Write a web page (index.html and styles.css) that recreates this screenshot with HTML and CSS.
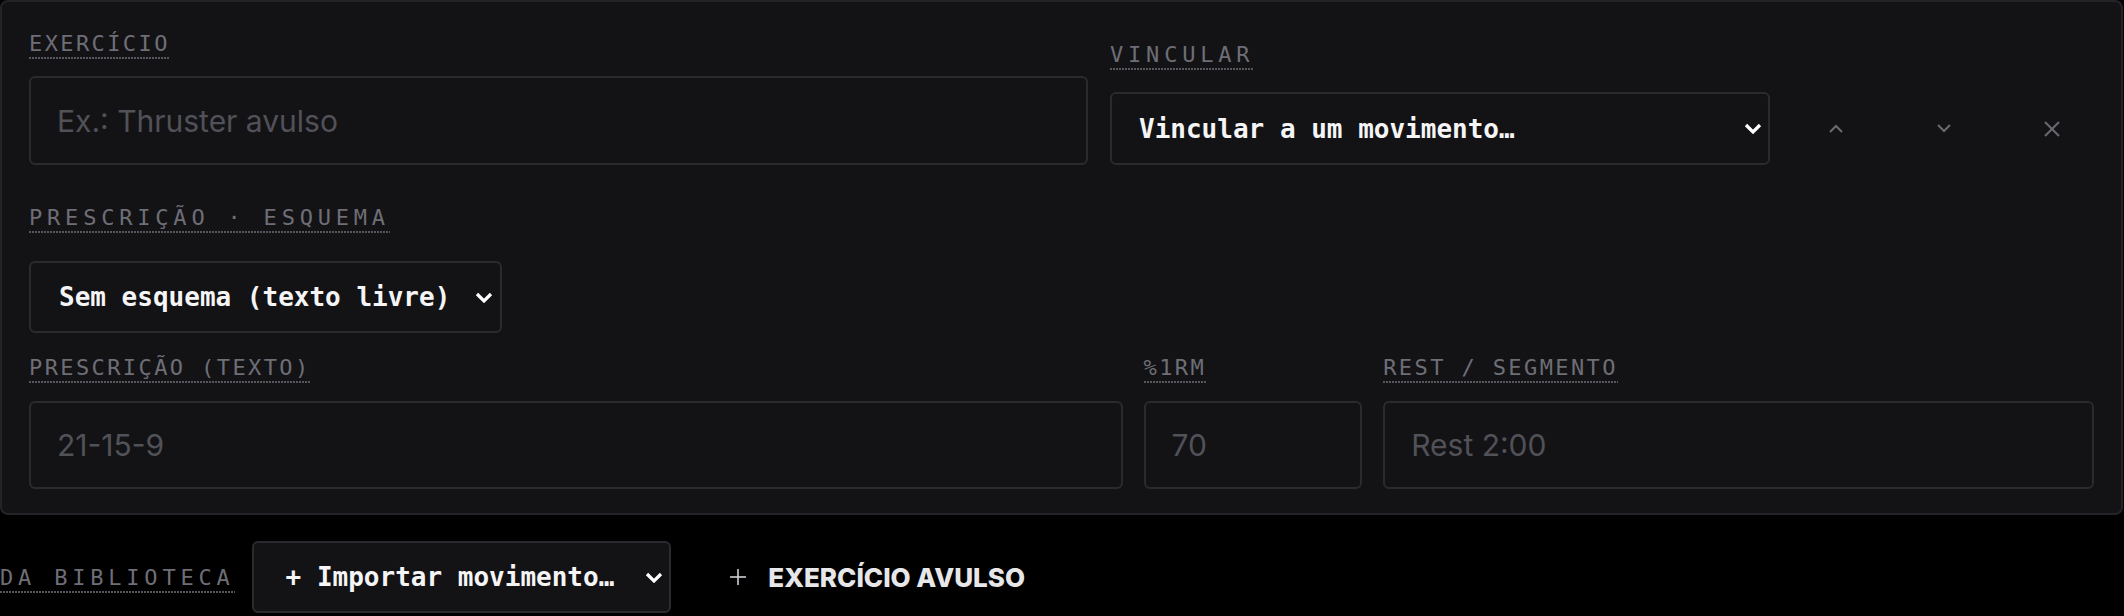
FILE: index.html
```html
<!DOCTYPE html>
<html lang="pt-BR">
<head>
<meta charset="utf-8">
<title>Exercício avulso</title>
<link rel="stylesheet" href="styles.css">
</head>
<body>
<section class="card">
  <div class="row-top">
    <div class="field field--grow">
      <label class="lbl">EXERCÍCIO</label>
      <input class="input input--tall" type="text" placeholder="Ex.: Thruster avulso">
    </div>
    <div class="field field--link">
      <label class="lbl lbl--wide lbl--gap">VINCULAR</label>
      <div class="select select--link">
        <span class="select__text">Vincular a um movimento…</span>
        <svg class="chev" width="18" height="11" viewBox="0 0 18 11"><polyline points="2,2 9,9 16,2"/></svg>
      </div>
    </div>
    <button class="icon-btn" type="button" aria-label="Mover para cima">
      <svg width="14" height="9" viewBox="0 0 14 9"><polyline points="1,8 7,2 13,8"/></svg>
    </button>
    <button class="icon-btn" type="button" aria-label="Mover para baixo">
      <svg width="14" height="9" viewBox="0 0 14 9"><polyline points="1,1 7,7 13,1"/></svg>
    </button>
    <button class="icon-btn" type="button" aria-label="Remover">
      <svg width="16" height="16" viewBox="0 0 16 16"><line x1="1" y1="1" x2="15" y2="15"/><line x1="15" y1="1" x2="1" y2="15"/></svg>
    </button>
  </div>

  <div class="field field--scheme">
    <label class="lbl lbl--wide lbl--scheme">PRESCRIÇÃO · ESQUEMA</label>
    <div class="select">
      <span class="select__text">Sem esquema (texto livre)</span>
      <svg class="chev" width="18" height="11" viewBox="0 0 18 11"><polyline points="2,2 9,9 16,2"/></svg>
    </div>
  </div>

  <div class="row-grid">
    <div class="field">
      <label class="lbl lbl--tight">PRESCRIÇÃO (TEXTO)</label>
      <input class="input" type="text" placeholder="21-15-9">
    </div>
    <div class="field">
      <label class="lbl lbl--tight">%1RM</label>
      <input class="input" type="text" placeholder="70">
    </div>
    <div class="field">
      <label class="lbl lbl--tight">REST / SEGMENTO</label>
      <input class="input" type="text" placeholder="Rest 2:00">
    </div>
  </div>
</section>

<div class="footer">
  <span class="lbl lbl--wide">DA BIBLIOTECA</span>
  <div class="select select--import">
    <span class="select__text">+ Importar movimento…</span>
    <svg class="chev" width="18" height="11" viewBox="0 0 18 11"><polyline points="2,2 9,9 16,2"/></svg>
  </div>
  <button class="add-btn" type="button">
    <svg width="16" height="16" viewBox="0 0 16 16"><line x1="8" y1="0" x2="8" y2="16"/><line x1="0" y1="8" x2="16" y2="8"/></svg>
    <span>EXERCÍCIO AVULSO</span>
  </button>
</div>
</body>
</html>
```

FILE: styles.css
```css
* {
  box-sizing: border-box;
}

html,
body {
  margin: 0;
  background: #000;
}

body {
  width: 2124px;
  height: 616px;
  overflow: hidden;
  font-family: "DejaVu Sans Mono", monospace;
}

/* Editor card */
.card {
  width: 2123px;
  background: #131316;
  border: 2px solid #242428;
  border-radius: 8px;
  padding: 30px 27px 24px 27px;
}

/* Field labels: mono caps with a dotted rule below */
.lbl {
  display: inline-block;
  align-self: flex-start;
  font: 400 22px/24px "DejaVu Sans Mono", monospace;
  letter-spacing: 2.4px;
  color: #6e6e76;
  padding-bottom: 3px;
  margin-bottom: 17px;
  background: linear-gradient(to right, #56565e 2px, transparent 2px) left bottom / 3px 2px repeat-x;
  white-space: nowrap;
}

.lbl--wide {
  letter-spacing: 4.8px;
}

.lbl--gap {
  margin-bottom: 22px;
}

.lbl--scheme {
  margin-bottom: 28px;
}

.lbl--tight {
  margin-bottom: 18px;
}

.field {
  display: flex;
  flex-direction: column;
  min-width: 0;
}

.field--grow {
  flex: 1;
}

.field--link {
  width: 660px;
}

/* Text inputs */
.input {
  width: 100%;
  height: 88px;
  background: #131316;
  border: 2px solid #2a2a2f;
  border-radius: 6px;
  padding: 0 26px;
  font: 400 30px "Inter", sans-serif;
  color: #e6e6e8;
  outline: none;
}

.input--tall {
  height: 89px;
}

.input::placeholder {
  color: #515158;
}

/* Dropdowns */
.select {
  display: inline-flex;
  align-items: center;
  align-self: flex-start;
  gap: 25px;
  height: 72px;
  padding: 0 7px 0 28px;
  background: #131316;
  border: 2px solid #2a2a2f;
  border-radius: 6px;
  font: 700 26px "DejaVu Sans Mono", monospace;
  color: #f5f5f6;
  white-space: nowrap;
}

.select--link {
  align-self: stretch;
  justify-content: space-between;
  height: 73px;
  padding: 0 6px 0 27px;
}

.select--import {
  padding: 0 6px 0 32px;
  gap: 31px;
}

.chev {
  flex: none;
  fill: none;
  stroke: #ffffff;
  stroke-width: 3.2;
}

/* Top row: name, link select and row actions */
.row-top {
  display: flex;
  align-items: flex-end;
}

.row-top .field--link {
  margin-left: 22px;
  margin-right: 24px;
}

.icon-btn {
  flex: none;
  width: 84px;
  height: 73px;
  display: grid;
  place-items: center;
  background: none;
  border: none;
  padding: 0;
  margin-right: 24px;
}

.icon-btn:last-child {
  margin-right: 0;
}

.icon-btn svg {
  fill: none;
  stroke: #6a6a71;
  stroke-width: 2;
}

.field--scheme {
  margin-top: 41px;
}

/* Prescription row */
.row-grid {
  display: grid;
  grid-template-columns: 5fr 1fr 3.25fr;
  column-gap: 21px;
  margin-top: 23px;
}

/* Library footer */
.footer {
  display: flex;
  align-items: center;
  gap: 17px;
  margin-top: 26px;
}

.footer .lbl {
  margin-bottom: 0;
  align-self: center;
  margin-top: 4px;
}

.add-btn {
  display: inline-flex;
  align-items: center;
  gap: 22px;
  margin-left: 42px;
  background: none;
  border: none;
  padding: 0;
  font: 800 26px "Inter", sans-serif;
  letter-spacing: 0;
  color: #e7e7e9;
}

.add-btn svg {
  fill: none;
  stroke: #cfcfd4;
  stroke-width: 1.6;
}
```
